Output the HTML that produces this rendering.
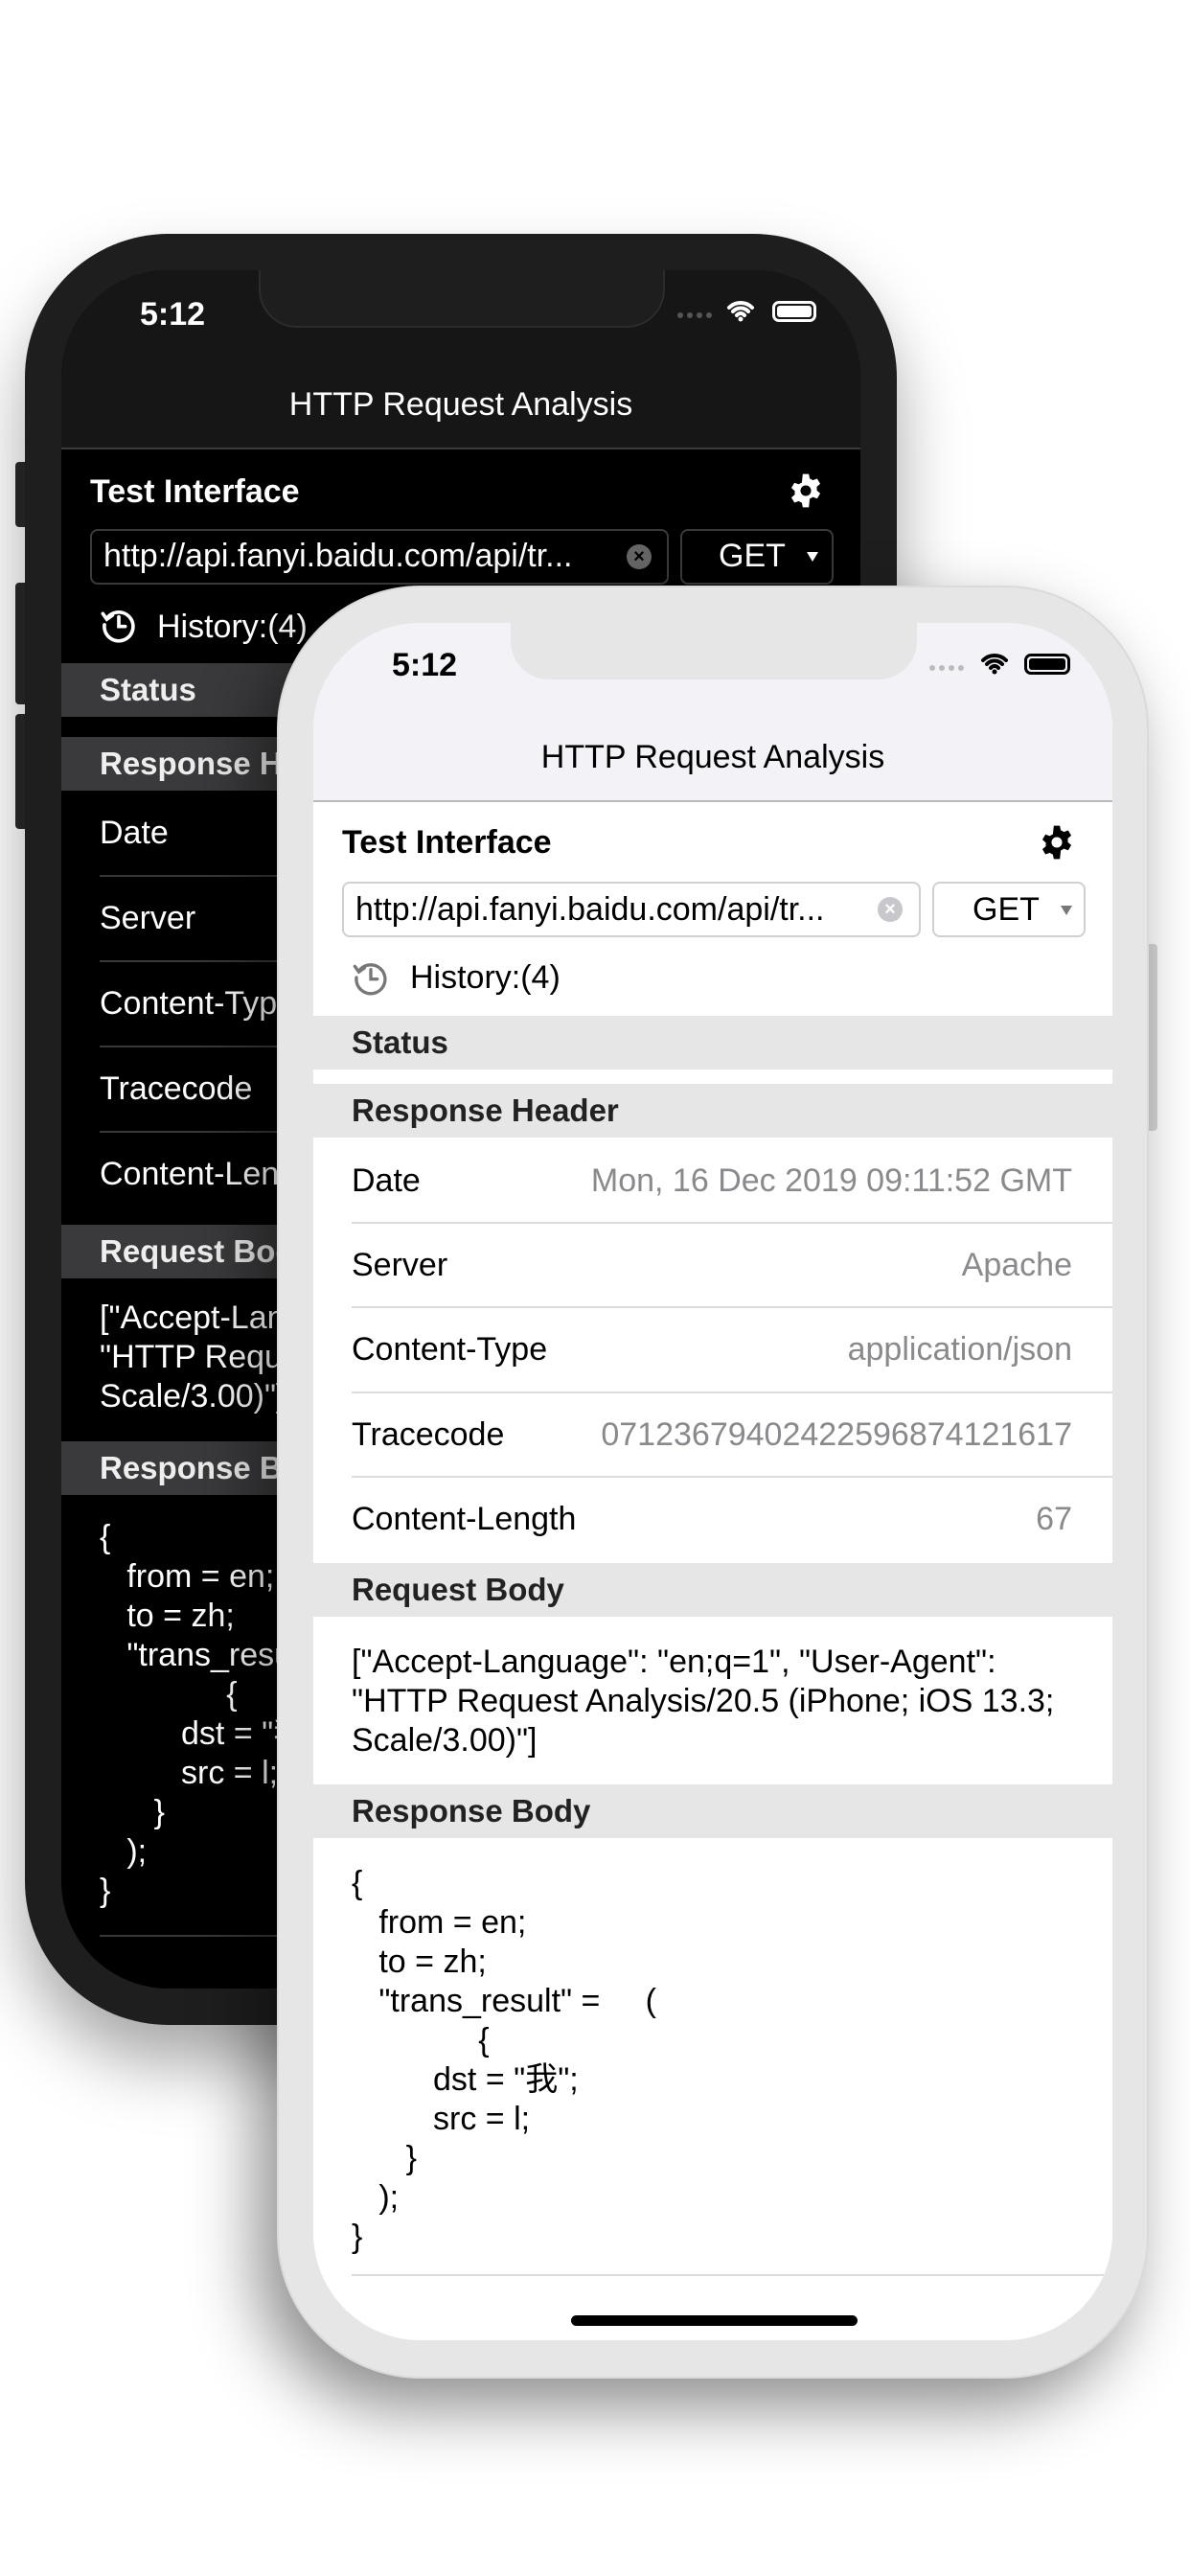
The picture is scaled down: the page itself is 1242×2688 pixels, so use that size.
<!DOCTYPE html>
<html><head><meta charset="utf-8">
<style>
*{margin:0;padding:0;box-sizing:border-box}
body{width:1242px;height:2688px;background:#fff;position:relative;overflow:hidden;font-family:"Liberation Sans","Noto Sans CJK SC",sans-serif}
.abs{position:absolute}
.frame{position:absolute;width:910px;border-radius:150px}
.scr{position:absolute;width:834px;border-radius:112px;overflow:hidden}
.scr div{position:absolute}
.t{font-size:34px;line-height:40px;white-space:pre}
.b{font-weight:bold}
.nav{left:0;top:0;width:834px;height:187px}
.title{left:0;width:834px;text-align:center;top:120px}
.band{left:0;width:834px;height:56px}
.band .t{left:40px;top:8px;font-weight:bold;font-size:33px}
.row{left:40px;width:794px;height:88px}
.row .l{left:0;top:24px}
.row .v{right:42px;top:24px}
.dark{background:#000;color:#fff}
.dark .nav{background:#161617;border-bottom:2px solid #3a3a3c}
.dark .band{background:#3a3a3c;color:#eee}
.dark .sep{background:#38383a}
.light{background:#fff;color:#000}
.light .nav{background:#f2f2f7;border-bottom:2px solid #b9b9bb}
.light .band{background:#e6e6e6;color:#222}
.light .sep{background:#dcdcdc}
.light .v{color:#8a8a8e}
.sep{height:2px}
</style></head><body>

<div class="abs" style="left:16px;top:482px;width:14px;height:68px;background:#2a2a2a;border-radius:4px"></div>
<div class="abs" style="left:16px;top:608px;width:14px;height:127px;background:#2a2a2a;border-radius:4px"></div>
<div class="abs" style="left:16px;top:745px;width:14px;height:120px;background:#2a2a2a;border-radius:4px"></div>

<div class="frame" style="left:26px;top:244px;height:1869px;background:#1e1e1f;box-shadow:0 40px 70px rgba(0,0,0,.35)"></div>
<div class="scr dark" style="left:64px;top:282px;height:1793px">
  <div class="nav"></div>
  <div style="left:206px;top:-2px;width:424px;height:62px;background:#1e1e1f;border:2px solid #2c2c2e;border-top:none;border-radius:0 0 40px 40px"></div>
  <div class="t b" style="left:82px;top:26px;color:#fff">5:12</div>
  <div style="left:643px;top:44px;width:36px;height:6px;border-top:6px dotted #555"></div>
  <svg style="position:absolute;left:694px;top:30px" width="30" height="24" viewBox="0 0 30 24"><path d="M3 9a17 17 0 0 1 24 0M7 13a11 11 0 0 1 16 0M11 17a5 5 0 0 1 8 0" stroke="#fff" stroke-width="4" fill="none" stroke-linecap="round"/><circle cx="15" cy="21" r="2.5" fill="#fff"/></svg>
  <div style="left:742px;top:32px;width:46px;height:22px;border:3px solid #fff;border-radius:7px;padding:2px"><div style="position:static;width:100%;height:100%;background:#fff;border-radius:3px"></div></div>
  <div class="t title" style="color:#fff">HTTP Request Analysis</div>
  <div class="t b" style="left:30px;top:211px">Test Interface</div>
  <svg style="position:absolute;left:758px;top:211px" width="38" height="38" viewBox="0 0 24 24"><path fill="#fff" fill-rule="evenodd" d="M10 1h4l.6 3a8 8 0 0 1 2 1.1l2.9-1 2 3.4-2.3 2a8 8 0 0 1 0 2.3l2.3 2-2 3.4-2.9-1a8 8 0 0 1-2 1.1L14 23h-4l-.6-3a8 8 0 0 1-2-1.1l-2.9 1-2-3.4 2.3-2a8 8 0 0 1 0-2.3l-2.3-2 2-3.4 2.9 1a8 8 0 0 1 2-1.1zM12 8.5a3.5 3.5 0 1 0 0 7a3.5 3.5 0 1 0 0-7z"/></svg>
  <div style="left:30px;top:270px;width:604px;height:58px;border:2px solid #3a3a3c;border-radius:8px"></div>
  <div class="t" style="left:44px;top:278px">http://api.fanyi.baidu.com/api/tr...</div>
  <div style="left:590px;top:286px;width:26px;height:26px;border-radius:50%;background:#666;color:#000;font-size:20px;line-height:26px;text-align:center;font-weight:bold">×</div>
  <div style="left:646px;top:270px;width:160px;height:58px;border:2px solid #3a3a3c;border-radius:8px"></div>
  <div class="t" style="left:686px;top:278px">GET</div>
  <div style="left:778px;top:294px;width:0;height:0;border-left:6px solid transparent;border-right:6px solid transparent;border-top:10px solid #fff"></div>
  <svg style="position:absolute;left:40px;top:350px" width="40" height="40" viewBox="0 0 24 24"><path d="M4.5 8A9 9 0 1 1 3 12" stroke="#fff" stroke-width="2.2" fill="none" stroke-linecap="round"/><path d="M2 5l2.5 3.5L8 6" stroke="#fff" stroke-width="2.2" fill="none" stroke-linecap="round"/><path d="M12 7v6h4" stroke="#fff" stroke-width="2.2" fill="none" stroke-linecap="round"/></svg>
  <div class="t" style="left:100px;top:352px">History:(4)</div>
  <div class="band" style="top:410px"><div class="t">Status</div></div>
  <div class="band" style="top:487px"><div class="t">Response Header</div></div>
  <div class="row" style="top:543px"><div class="t l">Date</div></div>
  <div class="sep" style="left:40px;top:631px;width:794px"></div>
  <div class="row" style="top:632px"><div class="t l">Server</div></div>
  <div class="sep" style="left:40px;top:720px;width:794px"></div>
  <div class="row" style="top:721px"><div class="t l">Content-Type</div></div>
  <div class="sep" style="left:40px;top:809px;width:794px"></div>
  <div class="row" style="top:810px"><div class="t l">Tracecode</div></div>
  <div class="sep" style="left:40px;top:898px;width:794px"></div>
  <div class="row" style="top:899px"><div class="t l">Content-Length</div></div>
  <div class="band" style="top:996px"><div class="t">Request Body</div></div>
  <div class="t" style="left:40px;top:1073px;line-height:41px">["Accept-Language": "en;q=1", "User-Agent":
"HTTP Request Analysis/20.5 (iPhone; iOS 13.3;
Scale/3.00)"]</div>
  <div class="band" style="top:1222px"><div class="t">Response Body</div></div>
  <div class="t" style="left:40px;top:1302px;line-height:41px">{
   from = en;
   to = zh;
   "trans_result" =     (
              {
         dst = "我";
         src = l;
      }
   );
}</div>
  <div class="sep" style="left:40px;top:1737px;width:794px"></div>
</div>

<div class="abs" style="left:1196px;top:985px;width:12px;height:195px;background:#d6d6d6;border-radius:4px"></div>
<div class="frame" style="left:289px;top:611px;height:1871px;background:#e6e6e6;border:2px solid #dadada;box-shadow:-20px 30px 70px rgba(0,0,0,.45)"></div>
<div class="scr light" style="left:327px;top:650px;height:1792px">
  <div class="nav"></div>
  <div style="left:206px;top:0;width:424px;height:59px;background:#e6e6e6;border-radius:0 0 40px 40px"></div>
  <div class="t b" style="left:82px;top:24px">5:12</div>
  <div style="left:643px;top:44px;width:36px;height:6px;border-top:6px dotted #bbb"></div>
  <svg style="position:absolute;left:696px;top:30px" width="30" height="24" viewBox="0 0 30 24"><path d="M3 9a17 17 0 0 1 24 0M7 13a11 11 0 0 1 16 0M11 17a5 5 0 0 1 8 0" stroke="#000" stroke-width="4" fill="none" stroke-linecap="round"/><circle cx="15" cy="21" r="2.5" fill="#000"/></svg>
  <div style="left:742px;top:32px;width:48px;height:22px;border:3px solid #000;border-radius:7px;padding:2px"><div style="position:static;width:100%;height:100%;background:#000;border-radius:3px"></div></div>
  <div class="t title">HTTP Request Analysis</div>
  <div class="t b" style="left:30px;top:209px">Test Interface</div>
  <svg style="position:absolute;left:757px;top:210px" width="38" height="38" viewBox="0 0 24 24"><path fill="#000" fill-rule="evenodd" d="M10 1h4l.6 3a8 8 0 0 1 2 1.1l2.9-1 2 3.4-2.3 2a8 8 0 0 1 0 2.3l2.3 2-2 3.4-2.9-1a8 8 0 0 1-2 1.1L14 23h-4l-.6-3a8 8 0 0 1-2-1.1l-2.9 1-2-3.4 2.3-2a8 8 0 0 1 0-2.3l-2.3-2 2-3.4 2.9 1a8 8 0 0 1 2-1.1zM12 8.5a3.5 3.5 0 1 0 0 7a3.5 3.5 0 1 0 0-7z"/></svg>
  <div style="left:30px;top:270px;width:604px;height:58px;border:2px solid #d0d0d0;border-radius:8px"></div>
  <div class="t" style="left:44px;top:279px">http://api.fanyi.baidu.com/api/tr...</div>
  <div style="left:589px;top:286px;width:26px;height:26px;border-radius:50%;background:#c7c7cc;color:#fff;font-size:20px;line-height:26px;text-align:center;font-weight:bold">×</div>
  <div style="left:646px;top:270px;width:160px;height:58px;border:2px solid #d0d0d0;border-radius:8px"></div>
  <div class="t" style="left:688px;top:279px">GET</div>
  <div style="left:780px;top:295px;width:0;height:0;border-left:6px solid transparent;border-right:6px solid transparent;border-top:10px solid #777"></div>
  <svg style="position:absolute;left:40px;top:350px" width="40" height="40" viewBox="0 0 24 24"><path d="M4.5 8A9 9 0 1 1 3 12" stroke="#777" stroke-width="2" fill="none" stroke-linecap="round"/><path d="M2 5l2.5 3.5L8 6" stroke="#777" stroke-width="2" fill="none" stroke-linecap="round"/><path d="M12 7v6h4" stroke="#777" stroke-width="2" fill="none" stroke-linecap="round"/></svg>
  <div class="t" style="left:101px;top:350px">History:(4)</div>
  <div class="band" style="top:410px"><div class="t">Status</div></div>
  <div class="band" style="top:481px"><div class="t">Response Header</div></div>
  <div class="row" style="top:538px"><div class="t l">Date</div><div class="t v">Mon, 16 Dec 2019 09:11:52 GMT</div></div>
  <div class="sep" style="left:40px;top:625px;width:794px"></div>
  <div class="row" style="top:626px"><div class="t l">Server</div><div class="t v">Apache</div></div>
  <div class="sep" style="left:40px;top:713px;width:794px"></div>
  <div class="row" style="top:714px"><div class="t l">Content-Type</div><div class="t v">application/json</div></div>
  <div class="sep" style="left:40px;top:802px;width:794px"></div>
  <div class="row" style="top:803px"><div class="t l">Tracecode</div><div class="t v">07123679402422596874121617</div></div>
  <div class="sep" style="left:40px;top:890px;width:794px"></div>
  <div class="row" style="top:891px"><div class="t l">Content-Length</div><div class="t v">67</div></div>
  <div class="band" style="top:981px"><div class="t">Request Body</div></div>
  <div class="t" style="left:40px;top:1064px;line-height:41px">["Accept-Language": "en;q=1", "User-Agent":
"HTTP Request Analysis/20.5 (iPhone; iOS 13.3;
Scale/3.00)"]</div>
  <div class="band" style="top:1212px"><div class="t">Response Body</div></div>
  <div class="t" style="left:40px;top:1295px;line-height:41px">{
   from = en;
   to = zh;
   "trans_result" =     (
              {
         dst = "我";
         src = l;
      }
   );
}</div>
  <div class="sep" style="left:40px;top:1723px;width:794px"></div>
  <div style="left:269px;top:1766px;width:299px;height:11px;background:#000;border-radius:6px"></div>
</div>
</body></html>
